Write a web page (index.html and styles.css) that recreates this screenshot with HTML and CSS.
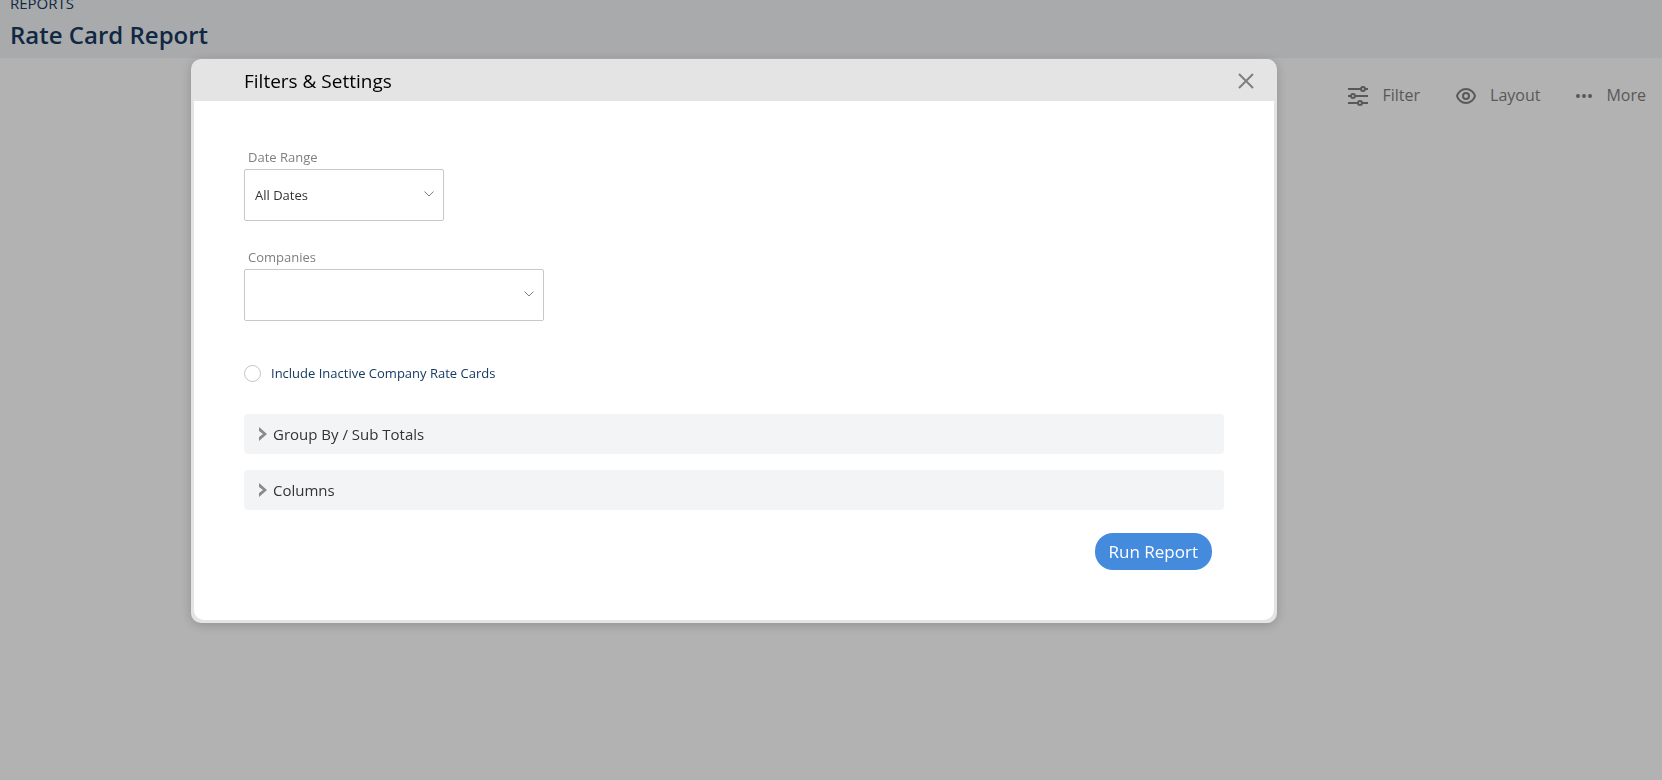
FILE: index.html
```html
<!DOCTYPE html>
<html lang="en">

<head>
    <meta charset="UTF-8">
    <meta name="viewport" content="width=device-width, initial-scale=1.0">
    <title>Rate Card Report</title>
    <link rel="stylesheet" href="styles.css">
</head>

<body>
    <header class="page-header">
        <div class="section-name">REPORTS</div>
        <h1>Rate Card Report</h1>
    </header>
    <main>
        <div class="toolbar">
            <button type="button" class="tool">
                <svg width="20" height="20" viewBox="0 0 20 20">
                    <path d="M0 3h13M17 3h3M0 10h3M7 10h13M0 17h10M14 17h6" />
                    <circle cx="15" cy="3" r="2" />
                    <circle cx="5" cy="10" r="2" />
                    <circle cx="12" cy="17" r="2" />
                </svg>
                <span>Filter</span>
            </button>
            <button type="button" class="tool">
                <svg width="20" height="20" viewBox="0 0 20 20">
                    <path d="M1 10C2 6 6 3 10 3s8 3 9 7c-1 4-5 7-9 7s-8-3-9-7z" />
                    <circle cx="10" cy="10" r="3" />
                </svg>
                <span>Layout</span>
            </button>
            <button type="button" class="tool">
                <svg class="dots" width="16" height="20" viewBox="0 0 16 20">
                    <circle cx="2" cy="10" r="2" />
                    <circle cx="8" cy="10" r="2" />
                    <circle cx="14" cy="10" r="2" />
                </svg>
                <span>More</span>
            </button>
        </div>
    </main>

    <div class="overlay">
        <div class="modal" role="dialog" aria-labelledby="modal-title">
            <div class="modal-header">
                <h2 id="modal-title">Filters &amp; Settings</h2>
                <button type="button" class="close-btn" aria-label="Close">
                    <svg width="16" height="16" viewBox="0 0 16 16">
                        <path d="M1 1l14 14M15 1L1 15" />
                    </svg>
                </button>
            </div>
            <form class="modal-body">
                <div class="field">
                    <label for="date-range">Date Range</label>
                    <select id="date-range">
                        <option>All Dates</option>
                    </select>
                    <svg class="arrow" width="10" height="6" viewBox="0 0 10 6">
                        <path d="M.5.5L5 5L9.500.5" />
                    </svg>
                </div>
                <div class="field field-wide">
                    <label for="companies">Companies</label>
                    <select id="companies">
                        <option></option>
                    </select>
                    <svg class="arrow" width="10" height="6" viewBox="0 0 10 6">
                        <path d="M.5.5L5 5L9.500.5" />
                    </svg>
                </div>
                <div class="check">
                    <input type="checkbox" id="inactive">
                    <label for="inactive">Include Inactive Company Rate Cards</label>
                </div>
                <button type="button" class="panel" aria-expanded="false">
                    <svg width="8" height="14" viewBox="0 0 8 14">
                        <path d="M0 0l8 7-8 7v-4l4-3-4-3z" />
                    </svg>
                    Group By / Sub Totals
                </button>
                <button type="button" class="panel" aria-expanded="false">
                    <svg width="8" height="14" viewBox="0 0 8 14">
                        <path d="M0 0l8 7-8 7v-4l4-3-4-3z" />
                    </svg>
                    Columns
                </button>
                <div class="actions">
                    <button type="submit" class="run-btn">Run Report</button>
                </div>
            </form>
        </div>
    </div>
</body>

</html>
```
FILE: styles.css
```css
* {
    box-sizing: border-box;
}

body {
    margin: 0;
    background-color: #fff;
    font-family: "Open Sans", sans-serif;
}

button,
select {
    font-family: inherit;
    border: none;
    background: none;
    padding: 0;
    cursor: pointer;
}

.page-header {
    height: 58px;
    padding: 0 10px;
    background-color: #f3f4f6;
    color: #173a61;
}

.section-name {
    font-size: 15px;
    line-height: 6px;
}

h1 {
    margin: 13px 0 0;
    font-size: 24px;
    font-weight: 600;
    line-height: 32px;
}

.toolbar {
    display: flex;
    justify-content: flex-end;
    gap: 36px;
    padding: 26px 16px;
}

.tool {
    display: flex;
    align-items: center;
    gap: 14px;
    color: #7f7f7f;
    font-size: 16px;
    line-height: 24px;
}

.tool span {
    padding-bottom: 2px;
    line-height: 22px;
}

.tool svg {
    fill: none;
    stroke: #7f7f7f;
    stroke-width: 2;
}

.tool .dots {
    fill: #7f7f7f;
    stroke: none;
}

.overlay {
    position: fixed;
    inset: 0;
    padding: 59px 385px 0 191px;
    background-color: rgba(0, 0, 0, 0.3);
}

.modal {
    padding: 0 3px 3px;
    border-radius: 10px;
    background-color: #e4e4e4;
    box-shadow: 0 2px 12px rgba(0, 0, 0, 0.2);
}

.modal-header {
    display: flex;
    justify-content: space-between;
    align-items: center;
    height: 42px;
    padding: 2px 20px 0 50px;
}

h2 {
    margin: 0;
    color: #000;
    font-size: 19px;
    font-weight: 400;
    line-height: 28px;
}

.close-btn {
    display: flex;
}

.close-btn svg {
    fill: none;
    stroke: #7f7f7f;
    stroke-width: 2;
}

.modal-body {
    padding: 46px 50px 50px;
    border-radius: 0 0 10px 10px;
    background-color: #fff;
}

.field {
    position: relative;
    width: 200px;
    margin-bottom: 26px;
}

.field-wide {
    width: 300px;
}

.field label {
    display: block;
    padding: 0 0 2px 4px;
    color: #7f7f7f;
    font-size: 13px;
    line-height: 20px;
}

.field select {
    appearance: none;
    display: block;
    width: 100%;
    height: 52px;
    padding: 0 10px;
    border: 1px solid #c8c8c8;
    border-radius: 2px;
    background-color: #fff;
    color: #333;
    font-size: 13px;
}

.arrow {
    position: absolute;
    right: 10px;
    bottom: 24px;
    fill: none;
    stroke: #7f7f7f;
    pointer-events: none;
}

.check {
    display: flex;
    align-items: center;
    gap: 10px;
    margin: 42px 0 31px;
    color: #173a61;
    font-size: 13px;
    line-height: 20px;
}

.check input {
    appearance: none;
    width: 17px;
    height: 17px;
    margin: 0;
    border: 1px solid #c0c4c8;
    border-radius: 50%;
    background-color: #fff;
}

.panel {
    display: flex;
    align-items: center;
    gap: 6px;
    width: 100%;
    height: 40px;
    margin-bottom: 16px;
    padding: 0 15px;
    border-radius: 4px;
    background-color: #f3f4f6;
    color: #333;
    font-size: 15px;
}

.panel svg {
    fill: #8a8a8a;
}

.actions {
    display: flex;
    justify-content: flex-end;
    padding: 7px 12px 0;
}

.run-btn {
    height: 37px;
    padding: 0 14px;
    border-radius: 18px;
    background-color: #448bde;
    color: #fff;
    font-size: 17px;
}
```
